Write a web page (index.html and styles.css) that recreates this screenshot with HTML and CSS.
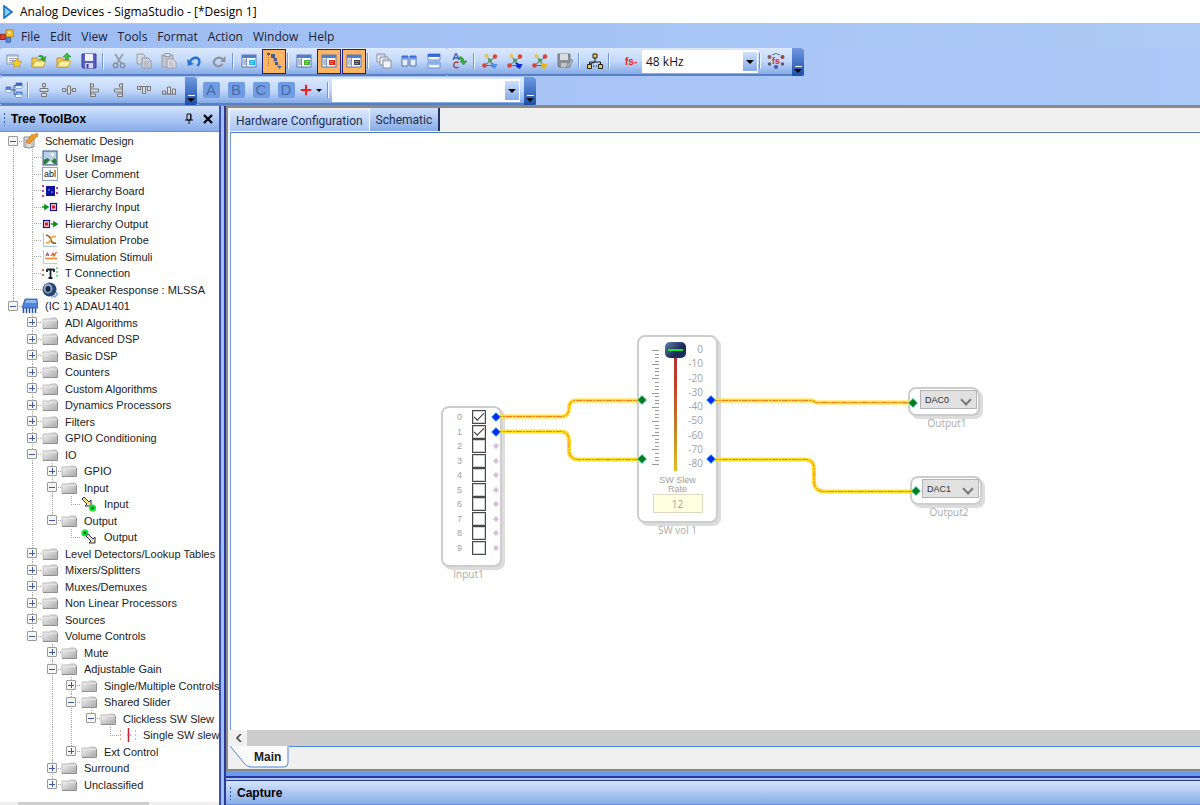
FILE: index.html
```
<!DOCTYPE html>
<html lang="en">
<head>
  <meta charset="UTF-8">
  <title>Analog Devices - SigmaStudio - [*Design 1]</title>
  <meta name="viewport" content="width=device-width, initial-scale=1.0">
  <link rel="stylesheet" href="styles.css">
</head>
<body>

  <!-- icon sprite -->
  <svg class="sprite" aria-hidden="true">
    <defs>
      <linearGradient id="folderGrad" x1="0" y1="0" x2="1" y2="1"><stop offset="0" stop-color="#f8f8f8"/><stop offset="1" stop-color="#a8a8a8"/></linearGradient>
      <linearGradient id="blueGrad" x1="0" y1="0" x2="0" y2="1"><stop offset="0" stop-color="#2a5fd0"/><stop offset="1" stop-color="#9cc0f4"/></linearGradient>
    </defs>
    <symbol id="i-app" viewBox="0 0 16 16"><rect x="7" y="1" width="8" height="8" fill="#f5c23a" stroke="#b98512"/><rect x="0" y="6" width="6" height="6" fill="#d8412b" stroke="#8e2416"/><rect x="7" y="10" width="5" height="5" fill="#5c8be0" stroke="#2f57a8"/><path d="M9 3h3v2H9z" fill="#ffeeb0"/></symbol>
    <symbol id="i-new" viewBox="0 0 16 16"><path d="M1 2h11v9H1z" fill="#f7f9ff" stroke="#8a94ad"/><path d="M1 3h11M3 5.500h7M3 7.500h7M3 9.500h4" stroke="#9aa6c0"/><path d="M11 5l1.500 3.300 3.500.4-2.600 2.400.7 3.400-3.100-1.700L8 14.500l.6-3.400L6 8.700l3.600-.4z" fill="#ffd024" stroke="#c08a10" stroke-width=".6"/></symbol>
    <symbol id="i-open" viewBox="0 0 16 16"><path d="M1 14V5h5l1 1.500h5V14z" fill="#f0cf58" stroke="#b9922a"/><path d="M1 14l3-6h11l-3 6z" fill="#fff0a0" stroke="#c9a436"/><path d="M7 3.500q4-3 6 1l2-1-1.500 5L9.500 6l1.700-.7Q10 3 7 3.500z" fill="#2fae35" stroke="#1d7f24" stroke-width=".5"/></symbol>
    <symbol id="i-openup" viewBox="0 0 16 16"><path d="M1 14V5h5l1 1.500h5V14z" fill="#f0cf58" stroke="#b9922a"/><path d="M1 14l3-6h11l-3 6z" fill="#fff0a0" stroke="#c9a436"/><path d="M11 0l4 4h-2.500v3h-3V4H7z" fill="#43bb3d" stroke="#1d7f24" stroke-width=".5"/></symbol>
    <symbol id="i-save" viewBox="0 0 16 16"><path d="M1 1h14v14H2l-1-1z" fill="#5a5fc4" stroke="#3a3f98"/><path d="M4 1h8v7H4z" fill="#f0f2ff"/><path d="M4 10h8v5H4z" fill="#d5d9ee"/><path d="M5.500 11h2v4h-2z" fill="#3a3f98"/></symbol>
    <symbol id="i-cut" viewBox="0 0 16 16"><path d="M4 1l6 9M12 1L6 10" stroke="#8f99a8" stroke-width="1.600"/><circle cx="4.500" cy="12.500" r="2.200" fill="none" stroke="#8490a2" stroke-width="1.400"/><circle cx="11.500" cy="12.500" r="2.200" fill="none" stroke="#8490a2" stroke-width="1.400"/></symbol>
    <symbol id="i-copy" viewBox="0 0 16 16"><path d="M1 1h6l2 2v8H1z" fill="#d6d9df" stroke="#98a0ae"/><path d="M6 5h6l3 3v7H6z" fill="#cdd0d6" stroke="#8f96a3"/><path d="M8 9h5M8 11h5M8 13h5" stroke="#a7adb8"/></symbol>
    <symbol id="i-paste" viewBox="0 0 16 16"><path d="M1 2h11v12H1z" fill="#c0c4cc" stroke="#989ea9"/><path d="M4 .5h5v3H4z" fill="#dfe2e8" stroke="#989ea9"/><path d="M6 6h6l3 3v6H6z" fill="#dcdee3" stroke="#989ea9"/><path d="M8 9h4M8 11h5M8 13h5" stroke="#b0b5be"/></symbol>
    <symbol id="i-undo" viewBox="0 0 16 16"><path d="M3.500 9Q7 3.500 11.500 5q4 3 0 8" fill="none" stroke="#2672d4" stroke-width="2.400"/><path d="M1 6l1 7 6-2z" fill="#2672d4"/></symbol>
    <symbol id="i-redo" viewBox="0 0 16 16"><path d="M12.500 7Q9 3 4.500 6q-4 4 1 7 4 1 6-2" fill="none" stroke="#8f959e" stroke-width="2.200"/><path d="M14.500 3v6H9z" fill="#8f959e"/></symbol>
    <symbol id="i-panel" viewBox="0 0 16 16"><rect x="1" y="2" width="14" height="12" fill="#fbfcff" stroke="#5877b0"/><path d="M1 2h14v3H1z" fill="#4f80cf"/><path d="M5.500 5v9" stroke="#7a93c0"/><path d="M2 7h3M2 9h3M2 11h3" stroke="#6a7ea8"/><rect x="8" y="7" width="6" height="5" fill="currentColor"/><path d="M9 8.500h4M9 10.500h3" stroke="#fff" stroke-opacity=".4"/></symbol>
    <symbol id="i-treeview" viewBox="0 0 16 16"><path d="M2.500 2v12M7.500 5v4h3v3h3" fill="none" stroke="#7b7f92" stroke-dasharray="1 1"/><path d="M1 0h3v2H1zM5 1h4v4H5zM8 5h3v3H8zM9 9h3v3H9z" fill="#4c5a92"/><path d="M11 13h5l-2.500 3z" fill="#4a68b0"/></symbol>
    <symbol id="i-cascade" viewBox="0 0 16 16"><g fill="#f2f4f8" stroke="#8790a2"><path d="M1 1h8v8H1z"/><path d="M4 4h8v8H4z"/><path d="M7 7h8v8H7z"/></g><path d="M7 8h8M4 5h8M1 2h8" stroke="#a9b3c6"/></symbol>
    <symbol id="i-tileh" viewBox="0 0 16 16"><path d="M1 3h6v10H1zM9 3h6v10H9z" fill="#e8effc" stroke="#5270b0"/><path d="M1 3h6v4H1zM9 3h6v4H9z" fill="url(#blueGrad)"/></symbol>
    <symbol id="i-tilev" viewBox="0 0 16 16"><path d="M2 1h12v6H2zM2 9h12v6H2z" fill="#f2f6ff" stroke="#6f8cc4"/><path d="M2 1h12v3H2zM2 9h12v3H2z" fill="url(#blueGrad)"/></symbol>
    <symbol id="i-ac" viewBox="0 0 16 16"><path d="M1 7l2.500-6h1L7 7M2 5h4" fill="none" stroke="#3d62b5" stroke-width="1.300"/><path d="M6.500 10q-2-2-4 0-1.500 2.500 0 4 2 1.500 4 0" fill="none" stroke="#a53b3b" stroke-width="1.300"/><path d="M7 4q4-1 5 4h3l-3.500 4L8 8h2Q9 6 7 6z" fill="#35b135" stroke="#1d7f24" stroke-width=".5"/></symbol>
    <symbol id="i-net" viewBox="0 0 16 16"><path d="M2.500 12.500L8 8l5 5M4.500 3l3.500 5 5-4M2.500 12.500h8" fill="none" stroke="#636878"/><circle cx="4.500" cy="3" r="2.200" fill="#e3c95a"/><circle cx="13" cy="3.500" r="2.200" fill="#d8452f"/><circle cx="2.500" cy="12.500" r="2.300" fill="#d8452f"/><circle cx="8" cy="7.500" r="2" fill="#49a34d"/><path d="M8 10q3-1 4 1h3.500L13 16 8.500 13.500l1.500-1z" fill="currentColor"/></symbol>
    <symbol id="i-saveas" viewBox="0 0 16 16"><path d="M1 1h12v13H2l-1-1z" fill="#8b9098" stroke="#72777f"/><path d="M3 1h8v6H3z" fill="#d9dce1"/><path d="M4 10h6v4H4z" fill="#c1c5cb"/><path d="M15 6l-5 6-1 3 3-1 4-6z" fill="#aeb2b9" stroke="#7d828b" stroke-width=".7"/></symbol>
    <symbol id="i-hier" viewBox="0 0 16 16"><path d="M8 4v5M2.500 12V9h11v3M8 9L3 11" fill="none" stroke="#222"/><g fill="#f3cc4d" stroke="#222"><path d="M6 1h4v4H6z"/><path d="M.5 11.500h4v4h-4z"/><path d="M11.500 11.500h4v4h-4z"/></g><path d="M6 13h1.500M9 13h1" stroke="#222"/></symbol>
    <symbol id="i-fsnet" viewBox="0 0 18 16"><path d="M5 2q4-3 8 0" fill="none" stroke="#6c7384"/><circle cx="2.500" cy="4" r="2" fill="#8a5a5a"/><circle cx="15.500" cy="4" r="2" fill="#a0442f"/><circle cx="2.500" cy="11" r="1.700" fill="#555b6b"/><circle cx="9" cy="14" r="2" fill="#4c52b4"/><circle cx="15.500" cy="11" r="1.700" fill="#555b6b"/></symbol>
    <symbol id="i-blocks" viewBox="0 0 18 16"><path d="M6 8h5M11 3.500H9v9h2" fill="none" stroke="#4a5c88"/><path d="M1 5h5v5H1zM11 1h6v5h-6zM11 10h6v5h-6z" fill="url(#blueGrad)" stroke="#4567a8" stroke-width=".7"/><path d="M1 8h5v2H1zM11 4h6v2h-6zM11 13h6v2h-6z" fill="#e6eefc"/></symbol>
    <symbol id="i-al1" viewBox="0 0 16 16"><path d="M8 1v14" stroke="#777"/><g fill="#ddd" stroke="#777"><path d="M6.500 1.500h3v3h-3z"/><path d="M4 6.500h8v3H4z"/><path d="M5.500 11.500h5v3h-5z"/></g></symbol>
    <symbol id="i-al2" viewBox="0 0 16 16"><path d="M1 8h14" stroke="#777"/><g fill="#ddd" stroke="#777"><path d="M1.500 6.500h3v3h-3z"/><path d="M6.500 4h3v8h-3z"/><path d="M11.500 6.500h3v3h-3z"/></g></symbol>
    <symbol id="i-al3" viewBox="0 0 16 16"><path d="M4.500 1v14" stroke="#777"/><g fill="#ddd" stroke="#777"><path d="M4.500 2h3v3h-3z"/><path d="M4.500 7h8v3h-8z"/><path d="M4.500 12h5v2.500h-5z"/></g></symbol>
    <symbol id="i-al4" viewBox="0 0 16 16"><path d="M11.500 1v14" stroke="#777"/><g fill="#ddd" stroke="#777"><path d="M8.500 2h3v3h-3z"/><path d="M3.500 7h8v3h-8z"/><path d="M6.500 12h5v2.500h-5z"/></g></symbol>
    <symbol id="i-al5" viewBox="0 0 16 16"><path d="M1 4.500h14" stroke="#777"/><g fill="#ddd" stroke="#777"><path d="M1.500 4.500h3v3h-3z"/><path d="M6.500 4.500h3v7h-3z"/><path d="M11.500 4.500h3v4h-3z"/></g></symbol>
    <symbol id="i-al6" viewBox="0 0 16 16"><path d="M1 12h14" stroke="#777"/><g fill="#ddd" stroke="#777"><path d="M1.500 9h3v3h-3z"/><path d="M6.500 5h3v7h-3z"/><path d="M11.500 7h3v5h-3z"/></g></symbol>
    <symbol id="i-plus" viewBox="0 0 16 16"><path d="M8 2v12M2 8h12" stroke="#f0201c" stroke-width="2.400"/></symbol>
    <symbol id="i-pin" viewBox="0 0 10 12"><path d="M3 1h4v6H3zM1 7h8M5 7v4M6.500 1v6" fill="none" stroke="#111"/></symbol>
    <symbol id="i-x" viewBox="0 0 10 10"><path d="M1 1l8 8M9 1L1 9" stroke="#000" stroke-width="2.200"/></symbol>

    <symbol id="t-folder" viewBox="0 0 16 16"><path d="M1 13V4h7l1-1h5l1 1v9z" fill="url(#folderGrad)" stroke="#bcbcbc"/><path d="M1 5.500h14" stroke="#e4e4e4"/><path d="M1 13.500h14.500V5" fill="none" stroke="#8f8f8f"/></symbol>
    <symbol id="t-design" viewBox="0 0 16 16"><path d="M2 4h10v10q-5 2-10 0z" fill="#dfdfdf" stroke="#8b8b8b"/><path d="M4 6v8M10 8v6" stroke="#a8a8a8"/><path d="M4 9l6-8 1.500 1L15 0l1 3-4 3-5 5z" fill="#f0982c" stroke="#b86a14" stroke-width=".6"/></symbol>
    <symbol id="t-image" viewBox="0 0 16 16"><rect x="1" y="1" width="14" height="14" fill="#b9cfec" stroke="#37547c"/><path d="M1.500 14V10l4-2 4 3 3-3 2 2v4z" fill="#2f7d3c"/><path d="M4 14l4-4 4 4z" fill="#e8efe8"/><circle cx="10.500" cy="4.500" r="1.700" fill="#fff5bc"/></symbol>
    <symbol id="t-board" viewBox="0 0 16 16"><rect x="4" y="3" width="9" height="10" fill="#10109a"/><path d="M6 6h2v2H6zM9 8h2v2H9z" fill="#4a62e0"/><path d="M0 2h2v2H0zM0 7h2v2H0zM0 12h2v2H0zM14 4h2v2h-2zM14 9h2v2h-2z" fill="#c03ac0"/></symbol>
    <symbol id="t-hin" viewBox="0 0 16 16"><path d="M0 8h3M3 6l3 2-3 2z" stroke="#0b8a1c" stroke-width="1.500" fill="#0b8a1c"/><rect x="8.500" y="4.500" width="6" height="7" fill="#fbd0d0" stroke="#15157c" stroke-width="1.200"/><rect x="10" y="6.500" width="3" height="3" fill="#e01818"/></symbol>
    <symbol id="t-hout" viewBox="0 0 16 16"><path d="M9 8h3M12 6l3 2-3 2z" stroke="#0b8a1c" stroke-width="1.500" fill="#0b8a1c"/><rect x="1.500" y="4.500" width="6" height="7" fill="#fbd0d0" stroke="#15157c" stroke-width="1.200"/><rect x="3" y="6.500" width="3" height="3" fill="#e01818"/></symbol>
    <symbol id="t-probe" viewBox="0 0 16 16"><path d="M1.500 1v13.500H15" fill="none" stroke="#a5c3dd"/><path d="M4 3q4 1 5 5t5 3" fill="none" stroke="#8e5f22" stroke-width="1.600"/><path d="M4 11q4 0 5-4t5-2" fill="none" stroke="#f0a030" stroke-width="1.600"/></symbol>
    <symbol id="t-stim" viewBox="0 0 16 16"><path d="M1.500 1v13.500H15" fill="none" stroke="#c4cdd6"/><path d="M3 9.500h12" stroke="#f09030" stroke-width="1.600"/><path d="M4 7l1.500-3L7 7M9 7l2-3 1 3 2.500-4" fill="none" stroke="#e2542c" stroke-width="1.200"/><path d="M4 6h3" stroke="#5571d0"/></symbol>
    <symbol id="t-conn" viewBox="0 0 16 16"><path d="M5 4.500h7M8.500 4v9M6.500 13h4M5 4v3M12 4v3" fill="none" stroke="#1a2430" stroke-width="1.800"/><path d="M0 4h2v2H0zM0 9h2v2H0z" fill="#f0603c"/><path d="M14 2h2v2h-2zM14 6h2v2h-2zM14 10h2v2h-2z" fill="#7ee07e"/></symbol>
    <symbol id="t-speaker" viewBox="0 0 16 16"><ellipse cx="7.500" cy="7.500" rx="7" ry="7" fill="#27466f"/><ellipse cx="6" cy="6.500" rx="4.500" ry="5" fill="#8fa9c8"/><ellipse cx="6" cy="7" rx="2.500" ry="3" fill="#16273f"/><path d="M9 15q5 0 6-5M12 15.500q3-1 4-4" fill="none" stroke="#4f93e0"/></symbol>
    <symbol id="t-ic" viewBox="0 0 16 16"><path d="M3 1h12l1 9H0z" fill="#4d86da" stroke="#2b59ad" stroke-width=".8"/><path d="M4 2h10l.5 3h-11z" fill="#8db8f2"/><path d="M1.500 10v5M4.500 10v5M7.500 10v5M10.500 10v5M13.500 10v5" stroke="#2450a4" stroke-width="1.500"/></symbol>
    <symbol id="t-in" viewBox="0 0 16 16"><path d="M1 3l2-2 5 5 2-2v6H4l2-2z" fill="#ffe680" stroke="#22307c"/><circle cx="11.500" cy="12" r="3.500" fill="#14e028"/><circle cx="11.500" cy="12" r="1.300" fill="#063"/></symbol>
    <symbol id="t-out" viewBox="0 0 16 16"><circle cx="4" cy="4" r="3.500" fill="#14e028"/><circle cx="4" cy="4" r="1.300" fill="#063"/><path d="M5 7l2-2 5 5 2-2v6H8l2-2z" fill="#ffe680" stroke="#22307c"/></symbol>
    <symbol id="t-slew" viewBox="0 0 16 16"><path d="M8.500 1v14" stroke="#c02030" stroke-width="1.500"/><path d="M7 8h4" stroke="#e040a0"/><path d="M.5 3v11" stroke="#f0a080" stroke-dasharray="2 2"/><path d="M15.500 3v11" stroke="#90e0a0" stroke-dasharray="2 2"/></symbol>
  </svg>

  <header class="titlebar">
    <svg width="12" height="14" viewBox="0 0 12 14"><path d="M2 1l8 6-8 6z" fill="#8fd0f8" stroke="#1272c8" stroke-width="1.600"/></svg>
    <span>Analog Devices - SigmaStudio - [*Design 1]</span>
  </header>

  <nav class="menubar">
    <svg class="icon app"><use href="#i-app"/></svg>
    <button>File</button><button>Edit</button><button>View</button><button>Tools</button><button>Format</button><button>Action</button><button>Window</button><button>Help</button>
  </nav>

  <div class="toolbars">
    <div class="toolrow">
      <div class="strip">
        <button class="tool" aria-label="New"><svg class="icon"><use href="#i-new"/></svg></button>
        <button class="tool" aria-label="Open"><svg class="icon"><use href="#i-open"/></svg></button>
        <button class="tool" aria-label="Open project"><svg class="icon"><use href="#i-openup"/></svg></button>
        <button class="tool" aria-label="Save"><svg class="icon"><use href="#i-save"/></svg></button>
        <i class="sep"></i>
        <button class="tool" aria-label="Cut"><svg class="icon"><use href="#i-cut"/></svg></button>
        <button class="tool" aria-label="Copy"><svg class="icon"><use href="#i-copy"/></svg></button>
        <button class="tool" aria-label="Paste"><svg class="icon"><use href="#i-paste"/></svg></button>
        <button class="tool" aria-label="Undo"><svg class="icon"><use href="#i-undo"/></svg></button>
        <button class="tool" aria-label="Redo"><svg class="icon"><use href="#i-redo"/></svg></button>
        <i class="sep"></i>
        <button class="tool cyan" aria-label="Workspace"><svg class="icon"><use href="#i-panel"/></svg></button>
        <button class="tool active" aria-label="Tree ToolBox"><svg class="icon"><use href="#i-treeview"/></svg></button>
        <i class="sep"></i>
        <button class="tool green" aria-label="Properties"><svg class="icon"><use href="#i-panel"/></svg></button>
        <button class="tool active red" aria-label="Output"><svg class="icon"><use href="#i-panel"/></svg></button>
        <button class="tool active dark" aria-label="Capture"><svg class="icon"><use href="#i-panel"/></svg></button>
        <i class="sep"></i>
        <button class="tool" aria-label="Cascade"><svg class="icon"><use href="#i-cascade"/></svg></button>
        <button class="tool" aria-label="Tile horizontally"><svg class="icon"><use href="#i-tileh"/></svg></button>
        <button class="tool" aria-label="Tile vertically"><svg class="icon"><use href="#i-tilev"/></svg></button>
      </div>
      <div class="strip">
        <button class="tool" aria-label="Autocomplete"><svg class="icon"><use href="#i-ac"/></svg></button>
        <i class="sep"></i>
        <button class="tool lblue" aria-label="Link"><svg class="icon"><use href="#i-net"/></svg></button>
        <button class="tool blue" aria-label="Link compile"><svg class="icon"><use href="#i-net"/></svg></button>
        <button class="tool gold" aria-label="Link compile download"><svg class="icon"><use href="#i-net"/></svg></button>
        <button class="tool" aria-label="Export"><svg class="icon"><use href="#i-saveas"/></svg></button>
        <i class="sep"></i>
        <button class="tool" aria-label="Hierarchy"><svg class="icon"><use href="#i-hier"/></svg></button>
        <i class="sep"></i>
        <label class="fs" for="rate">fs-</label>
        <span class="combo rate"><select id="rate"><option>48 kHz</option><option>96 kHz</option></select></span>
        <i class="sep"></i>
        <button class="tool fs-tool"><svg class="icon wide"><use href="#i-fsnet"/></svg><span>fs</span></button>
        <button class="grip" aria-label="More"></button>
      </div>
    </div>
    <div class="toolrow">
      <div class="strip">
        <button class="tool" aria-label="Arrange"><svg class="icon wide"><use href="#i-blocks"/></svg></button>
        <i class="sep"></i>
        <button class="tool" aria-label="Align centers"><svg class="icon"><use href="#i-al1"/></svg></button>
        <button class="tool" aria-label="Align middles"><svg class="icon"><use href="#i-al2"/></svg></button>
        <button class="tool" aria-label="Align left"><svg class="icon"><use href="#i-al3"/></svg></button>
        <button class="tool" aria-label="Align right"><svg class="icon"><use href="#i-al4"/></svg></button>
        <button class="tool" aria-label="Align top"><svg class="icon"><use href="#i-al5"/></svg></button>
        <button class="tool" aria-label="Align bottom"><svg class="icon"><use href="#i-al6"/></svg></button>
        <button class="grip" aria-label="More"></button>
      </div>
      <div class="strip">
        <button class="tool letter"><b>A</b></button>
        <button class="tool letter"><b>B</b></button>
        <button class="tool letter"><b>C</b></button>
        <button class="tool letter"><b>D</b></button>
        <button class="tool plus" aria-label="Add"><svg class="icon"><use href="#i-plus"/></svg></button>
        <i class="sep"></i>
        <span class="combo preset"><select aria-label="Preset"><option></option></select></span>
        <button class="grip" aria-label="More"></button>
      </div>
    </div>
  </div>

  <main class="workspace">
    <aside class="toolbox">
      <div class="panel-head">
        <h2>Tree ToolBox</h2>
        <button aria-label="Pin"><svg width="10" height="12"><use href="#i-pin"/></svg></button>
        <button aria-label="Close"><svg width="10" height="10"><use href="#i-x"/></svg></button>
      </div>
      <ul id="tree" class="tree"></ul>
      <div class="tree-scroll"><i></i></div>
    </aside>
    <div class="splitter"></div>

    <section class="editor">
      <div class="document">
        <div class="tabs">
          <button class="tab">Hardware Configuration</button>
          <button class="tab selected">Schematic</button>
        </div>
        <div class="canvas">
          <div class="node node-input">
            <div id="channels" class="channels"></div>
            <span class="caption">Input1</span>
          </div>

          <div class="node node-volume">
            <div class="fader">
              <svg id="ticks" class="ticks" width="10" height="118"></svg>
              <input type="range" min="-80" max="0" value="0" aria-label="Volume">
              <ol class="scale"><li>0</li><li>-10</li><li>-20</li><li>-30</li><li>-40</li><li>-50</li><li>-60</li><li>-70</li><li>-80</li></ol>
            </div>
            <label class="slew" for="slewRate">SW Slew<br>Rate</label>
            <input id="slewRate" class="slew-value" type="text" value="12">
            <span class="caption">SW vol 1</span>
          </div>

          <div class="node node-dac dac0">
            <span class="dac"><select aria-label="Output1"><option>DAC0</option></select></span>
            <span class="caption">Output1</span>
          </div>
          <div class="node node-dac dac1">
            <span class="dac"><select aria-label="Output2"><option>DAC1</option></select></span>
            <span class="caption">Output2</span>
          </div>

          <svg class="wires" width="800" height="600" viewBox="231 133 800 600">
            <g id="wires"></g>
            <g id="pins"></g>
          </svg>
        </div>
        <div class="hscroll"><button aria-label="Scroll left"><svg width="8" height="8" viewBox="0 0 8 8"><path d="M6 0L2 4l4 4" fill="none" stroke="#444" stroke-width="1.600"/></svg></button><i></i></div>
        <div class="sheets">
          <button class="sheet">
            <svg width="59" height="22" viewBox="0 0 59 22"><path d="M0 0L14 17Q17 21 21 21H54Q58 21 58 17V0" fill="#fbfbfb" stroke="#4f86d8"/></svg>
            <span>Main</span>
          </button>
          <i class="sheet-line"></i>
        </div>
      </div>
      <div class="hsplitter"></div>
      <div class="panel-head capture"><h2>Capture</h2></div>
    </section>
  </main>

  <script src="script.js"></script>
</body>
</html>
```
FILE: styles.css
```
* { box-sizing: border-box; }
body { margin:0; height:100vh; display:flex; flex-direction:column; overflow:hidden; background:#a9c5f5; font-family:"Liberation Sans", Arial, sans-serif; font-size:12px; color:#1c1c1c; }
button { font:inherit; color:inherit; border:none; background:none; padding:0; margin:0; }
select, input { font:inherit; color:inherit; margin:0; border-radius:0; }
i { font-style:normal; }
.sprite { position:absolute; width:0; height:0; }
.icon { width:16px; height:16px; display:block; }
.icon.wide { width:18px; }

/* title + menu */
.titlebar { height:24px; flex:none; display:flex; align-items:center; gap:6px; padding-left:2px; background:#fff; border-bottom:1px solid #b8c6dc; font-family:"Open Sans", "Noto Sans", sans-serif; color:#000; white-space:nowrap; }
.menubar { height:24px; flex:none; display:flex; align-items:center; gap:10px; background:linear-gradient(90deg, #9dbcf2, #aecbf7); font-family:"Open Sans", "Noto Sans", sans-serif; color:#1a2236; }
.menubar .app { width:14px; margin-right:-3px; }

/* toolbars */
.toolbars { flex:none; background:linear-gradient(90deg, #a3c0f4, #adc9f8); border-bottom:1px solid #808890; }
.toolrow { display:flex; align-items:stretch; height:28px; margin-bottom:1px; }
.toolrow:last-child { margin-bottom:0; }
.strip { display:flex; align-items:center; gap:1px; padding-left:2px; background:linear-gradient(#dbe9fd, #c3d8fa 50%, #86abe6); border-bottom:2px solid #5781c4; border-radius:3px 0 0 3px; }
.tool { width:24px; height:25px; display:flex; align-items:center; justify-content:center; color:#e2a81c; }
.tool.active { background:#fbb564; border:1px solid #20207c; }
.tool.cyan { color:#22b4e8; }
.tool.green { color:#44b02c; }
.tool.red { color:#d8281c; }
.tool.dark { color:#454545; }
.tool.lblue { color:#4f90e4; }
.tool.blue { color:#0a2cd8; }
.tool.gold { color:#e8b414; }
.sep { width:4px; height:16px; border-left:1px solid #6f96d6; background:linear-gradient(90deg, #eef4fe 1px, transparent 1px); }
.fs { width:28px; padding-left:12px; color:#e81c1c; font-size:10px; font-weight:bold; }
.fs-tool { position:relative; }
.fs-tool span { position:absolute; left:0; right:0; top:7px; line-height:10px; text-align:center; color:#f02020; font-size:9px; font-weight:bold; }
.combo { position:relative; display:block; height:23px; background:#fff; }
.combo select { appearance:none; width:100%; height:100%; border:none; background:transparent; padding:0 20px 0 4px; font-family:"Open Sans", "Noto Sans", sans-serif; color:#111; }
.combo::after { content:""; position:absolute; right:1px; top:2px; width:14px; height:19px; pointer-events:none; background:linear-gradient(#cfe0fb, #86abe6); }
.combo::before { content:""; position:absolute; z-index:1; right:4px; top:10px; pointer-events:none; border:4px solid transparent; border-top-color:#000; border-bottom:0; }
.rate { width:116px; }
.preset { width:188px; }
.grip { width:12px; height:28px; margin-left:3px; align-self:flex-start; display:flex; flex-direction:column; align-items:center; justify-content:flex-end; gap:2px; padding-bottom:3px; background:linear-gradient(#6f9ae0, #1c4ea8); border-radius:0 3px 3px 0; }
.grip::before { content:""; width:7px; height:1px; background:#fff; }
.grip::after { content:""; border:4px solid transparent; border-top-color:#000; border-bottom:0; }
.letter b { width:17px; height:16px; line-height:16px; background:#6f9ce2; color:#4a6ea8; font-weight:normal; font-size:15px; text-align:center; border-radius:2px; }
.plus { width:27px; gap:3px; justify-content:flex-start; }
.plus .icon { width:14px; height:14px; flex:none; }
.plus::after { content:""; border:3px solid transparent; border-top-color:#000; border-bottom:0; }

/* panels */
.workspace { flex:1; min-height:0; display:flex; }
.toolbox { width:219px; flex:none; display:flex; flex-direction:column; background:#fff; overflow:hidden; }
.panel-head { flex:none; height:26px; display:flex; align-items:center; gap:9px; padding:0 6px 0 3px; background:linear-gradient(#d4e4fc, #88adea); border-bottom:1px solid #6a94da; }
.panel-head h2 { flex:1; margin:0; padding-left:8px; font-size:12px; color:#000; background:radial-gradient(circle, #3c62b0 1px, transparent 1px) 0 0 / 3px 4px repeat-y; }
.panel-head svg { display:block; }
.splitter { width:7px; flex:none; background:#9fc0f4; border-left:2px solid #3a4fb4; border-right:2px solid #2c3a96; }
.editor { flex:1; min-width:0; display:flex; flex-direction:column; }
.document { flex:1; min-height:0; display:flex; flex-direction:column; padding-left:2px; background:#f0f0f0; border:2px solid #8a8a8a; border-right:none; }

/* tree */
.tree { flex:1; list-style:none; margin:0; padding:1px 0 0 3px; overflow:hidden; font-size:11px; }
.tree li { display:flex; align-items:center; height:16px; white-space:nowrap; color:#222; }
.tree li:nth-child(even) { height:17px; }
.guide { width:20px; height:100%; flex:none; position:relative; }
.guide:nth-child(odd) { width:19px; }
.guide.down, .guide.half { background:repeating-linear-gradient(#a8a8a8 0 1px, transparent 1px 2px) 10px 0 / 1px 100% no-repeat; }
.guide.half { background-size:1px 50%; }
.guide.start { background-position:10px 100%; background-size:1px 50%; }
.guide.branch::before { content:""; position:absolute; left:10px; right:0; top:8px; height:1px; background:repeating-linear-gradient(90deg, #a8a8a8 0 1px, transparent 1px 2px); }
.toggle { position:absolute; left:5px; top:3px; width:10px; height:10px; border:1px solid #9a9a9a; border-radius:1px; background:linear-gradient(#3b58a8, #3b58a8) 1px 4px / 6px 1px no-repeat, #f6f6f6; }
.toggle.closed::after { content:""; position:absolute; left:4px; top:1px; width:1px; height:6px; background:#3b58a8; }
.tree .icon { flex:none; margin-right:7px; }
.abl { width:16px; height:14px; flex:none; margin-right:7px; border:1px solid #8ea4c0; font-size:9px; line-height:12px; text-align:center; color:#111; }
.tree-scroll { flex:none; height:3px; background:#f0f0f0; }
.tree-scroll i { display:block; height:3px; width:60%; margin-left:18px; background:#cdcdcd; }

/* document */
.tabs { flex:none; height:24px; display:flex; align-items:flex-end; border-bottom:1px solid #fff; font-family:Roboto, "Liberation Sans", sans-serif; }
.tab { height:21px; padding:0 6px; background:linear-gradient(#d9e7fd, #a9c6f4); color:#1d2f55; }
.tab.selected { height:23px; background:linear-gradient(#cfe0fb, #86abe6); border-right:2px solid #1f3463; border-left:1px solid #fff; }
.canvas { flex:1; min-height:0; position:relative; overflow:hidden; background:#fff; border-top:1px solid #4f78b8; border-left:1px solid #6f9ad8; }
.wires { position:absolute; left:0; top:0; pointer-events:none; }
.wires path { fill:none; }
.wire-base { stroke:#ffe02c; stroke-width:4; }
.wire-dash { stroke:#f0801c; stroke-width:1; stroke-dasharray:6 1 2 1; }
.node { position:absolute; background:#fff; border:2px solid #cdcdcd; border-radius:8px; box-shadow:3px 3px 0 #dcdcdc; color:#a2a2a2; font-size:10px; }
.caption { position:absolute; left:0; right:0; top:100%; padding-top:3px; line-height:13px; text-align:center; white-space:nowrap; font-family:"Open Sans", "Noto Sans", sans-serif; color:#aaa; }
.node-input { left:210px; top:273px; width:61px; height:161px; padding:2px 0; }
.node-input .caption { right:6px; }
.channels { display:grid; grid-template-rows:repeat(10, 1fr); height:145px; }
.channels label { display:flex; align-items:center; gap:10px; padding-left:14px; font-size:9px; }
.channels input { appearance:none; width:14px; height:14px; border:1px solid #4a4a4a; outline:1px solid #cfcfcf; outline-offset:-2px; background:#fff; display:grid; place-items:center; }
.channels input:checked::after { content:""; width:9px; height:4px; margin-top:-3px; border-left:1px solid #333; border-bottom:1px solid #333; transform:rotate(-45deg); }
.node-volume { left:406px; top:202px; width:81px; height:188px; padding-top:5px; text-align:center; }
.fader { display:flex; align-items:flex-start; height:132px; padding-left:13px; }
.ticks { margin-top:8px; }
.fader input { appearance:none; writing-mode:vertical-lr; direction:rtl; width:21px; height:129px; margin:0 2px 0 5px; background:linear-gradient(#a03030, #c83c28 30%, #c07828 60%, #e0c020) 9px 4px / 3px 126px no-repeat; }
.fader input::-webkit-slider-thumb { appearance:none; width:21px; height:16px; border-radius:5px; background:linear-gradient(#20e040, #20e040) center / 15px 2px no-repeat, linear-gradient(135deg, #5f7fa8, #1c2c58 60%); }
.scale { flex:1; height:128px; list-style:none; margin:0; padding:0 13px 0 0; display:flex; flex-direction:column; justify-content:space-between; text-align:right; line-height:14px; font-family:"Open Sans", "Noto Sans", sans-serif; }
.slew { display:block; margin-top:2px; line-height:9px; font-size:9px; }
.slew-value { width:50px; height:19px; padding:0; text-align:center; background:#ffffe1; border:1px solid #ddd8c0; font-family:"Open Sans", "Noto Sans", sans-serif; }
.node-dac { width:72px; height:29px; }
.node-dac .caption { padding-left:6px; }
.dac0 { left:677px; top:254px; }
.dac1 { left:679px; top:343px; }
.dac { position:relative; display:block; width:57px; height:19px; margin:1px 0 0 10px; }
.dac select { display:block; appearance:none; width:100%; height:100%; padding:0 0 0 4px; border:1px solid #b4b4b4; background:#e1e1e1; color:#333; font-size:9px; }
.dac::after { content:""; position:absolute; right:7px; top:6px; width:6px; height:6px; border-right:2px solid #777; border-bottom:2px solid #777; transform:rotate(45deg); pointer-events:none; }
.hscroll { flex:none; display:flex; height:16px; background:#f0f0f0; }
.hscroll button { width:17px; }
.hscroll i { flex:1; background:#cdcdcd; }
.sheets { flex:none; height:23px; display:flex; }
.sheet { position:relative; width:59px; height:22px; font-weight:bold; font-size:12px; }
.sheet svg { display:block; }
.sheet span { position:absolute; left:24px; top:4px; }
.sheet-line { flex:1; border-top:1px solid #4f86d8; }
.hsplitter { flex:none; height:10px; background:linear-gradient(#6a9cec 5px, #26389c 5px 7px, #a9c5f5 7px 9px, #26389c 9px); }
.capture { height:24px; }
```
FILE: script.js
```
// [depth, icon, label, state]  state: + closed, - open, empty = leaf
const treeData = [
  [0, 'design', 'Schematic Design', '-'],
  [1, 'image', 'User Image'],
  [1, 'comment', 'User Comment'],
  [1, 'board', 'Hierarchy Board'],
  [1, 'hin', 'Hierarchy Input'],
  [1, 'hout', 'Hierarchy Output'],
  [1, 'probe', 'Simulation Probe'],
  [1, 'stim', 'Simulation Stimuli'],
  [1, 'conn', 'T Connection'],
  [1, 'speaker', 'Speaker Response : MLSSA'],
  [0, 'ic', '(IC 1) ADAU1401', '-'],
  [1, 'folder', 'ADI Algorithms', '+'],
  [1, 'folder', 'Advanced DSP', '+'],
  [1, 'folder', 'Basic DSP', '+'],
  [1, 'folder', 'Counters', '+'],
  [1, 'folder', 'Custom Algorithms', '+'],
  [1, 'folder', 'Dynamics Processors', '+'],
  [1, 'folder', 'Filters', '+'],
  [1, 'folder', 'GPIO Conditioning', '+'],
  [1, 'folder', 'IO', '-'],
  [2, 'folder', 'GPIO', '+'],
  [2, 'folder', 'Input', '-'],
  [3, 'in', 'Input'],
  [2, 'folder', 'Output', '-'],
  [3, 'out', 'Output'],
  [1, 'folder', 'Level Detectors/Lookup Tables', '+'],
  [1, 'folder', 'Mixers/Splitters', '+'],
  [1, 'folder', 'Muxes/Demuxes', '+'],
  [1, 'folder', 'Non Linear Processors', '+'],
  [1, 'folder', 'Sources', '+'],
  [1, 'folder', 'Volume Controls', '-'],
  [2, 'folder', 'Mute', '+'],
  [2, 'folder', 'Adjustable Gain', '-'],
  [3, 'folder', 'Single/Multiple Controls', '+'],
  [3, 'folder', 'Shared Slider', '-'],
  [4, 'folder', 'Clickless SW Slew', '-'],
  [5, 'slew', 'Single SW slew'],
  [3, 'folder', 'Ext Control', '+'],
  [2, 'folder', 'Surround', '+'],
  [2, 'folder', 'Unclassified', '+']
];

// true when another row of the same depth follows under the same parent
function continues(index, depth) {
  for (let i = index + 1; i < treeData.length; i++) {
    if (treeData[i][0] < depth) return false;
    if (treeData[i][0] === depth) return true;
  }
  return false;
}

document.getElementById('tree').innerHTML = treeData.map(([depth, icon, label, state], i) => {
  let cells = '';
  for (let d = 0; d < depth; d++) {
    cells += `<span class="guide ${continues(i, d) ? 'down' : ''}"></span>`;
  }
  const line = i === 0 ? 'start' : '';
  const cls = continues(i, depth) ? 'down' : (i ? 'half' : '');
  const toggle = state ? `<button class="toggle ${state === '+' ? 'closed' : ''}" aria-label="Toggle ${label}"></button>` : '';
  cells += `<span class="guide branch ${cls} ${line}">${toggle}</span>`;
  const image = icon === 'comment' ? '<span class="abl">abl</span>' : `<svg class="icon"><use href="#t-${icon}"/></svg>`;
  return `<li>${cells}${image}<span>${label}</span></li>`;
}).join('');

// input channels
let channels = '';
for (let i = 0; i < 10; i++) {
  channels += `<label>${i}<input type="checkbox" ${i < 2 ? 'checked' : ''}></label>`;
}
document.getElementById('channels').innerHTML = channels;

// fader ticks, long one every 10 dB
let ticks = '';
for (let i = 0; i <= 32; i++) {
  const y = Math.round(i * 3.55);
  ticks += `<path d="M${i % 4 ? 3 : 0} ${y}.5H7" stroke="#999"/>`;
}
document.getElementById('ticks').innerHTML = ticks;

// wires
const wires = [
  'M496 416.5H562Q569 416 569 408Q569 400 577 400.5H642',
  'M496 431.5H560Q569 431 569 441V450Q569 459 578 459.5H642',
  'M712 400.5H812L816 402.5H913',
  'M712 459.5H804Q814 459 814 469V481Q814 491 824 491.5H916'
];
document.getElementById('wires').innerHTML = wires.map(d =>
  `<path class="wire-base" d="${d}"/><path class="wire-dash" d="${d}"/>`).join('');

// pins
function pin(x, y, fill, glow, r) {
  const d = s => `M${x} ${y - s}L${x + s} ${y}L${x} ${y + s}L${x - s} ${y}Z`;
  return (glow ? `<path d="${d(r + 1)}" style="fill:${glow}"/>` : '') + `<path d="${d(r)}" style="fill:${fill}"/>`;
}
let pins = '';
for (let i = 0; i < 10; i++) {
  const y = 417 + Math.round(i * 14.5);
  pins += i < 2 ? pin(496, y, '#0a28f0', '#40c8f8', 4) : pin(496, y, '#d8bcd8', '', 3);
}
[[642, 400], [642, 459], [913, 403], [916, 491]].forEach(p => pins += pin(p[0], p[1], '#0a7a22', '#40d8a0', 4));
[[711, 400], [711, 459]].forEach(p => pins += pin(p[0], p[1], '#0a28f0', '#40c8f8', 4));
document.getElementById('pins').innerHTML = pins;
```
